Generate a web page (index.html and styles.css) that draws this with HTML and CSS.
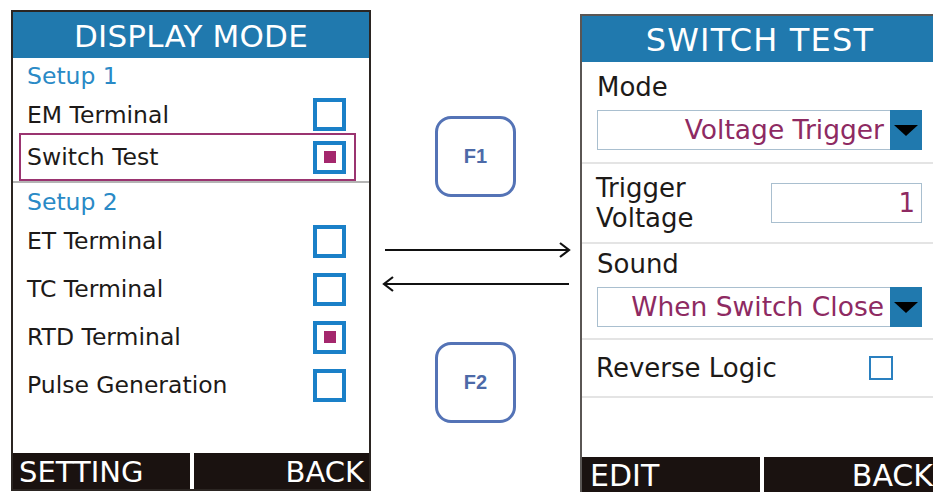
FILE: index.html
```html
<!DOCTYPE html>
<html>
<head>
<meta charset="utf-8">
<link rel="stylesheet" href="styles.css">
</head>
<body>
<div class="stage">
  <section class="panel panel-left">
    <div class="hdr">DISPLAY MODE</div>
    <div class="list">
      <div class="grp">Setup 1</div>
      <div class="item item-em"><span>EM Terminal</span><span class="cb"></span></div>
      <div class="item item-sel"><span>Switch Test</span><span class="cb"><i></i></span></div>
      <div class="sep"></div>
      <div class="grp grp2">Setup 2</div>
      <div class="item"><span>ET Terminal</span><span class="cb"></span></div>
      <div class="item"><span>TC Terminal</span><span class="cb"></span></div>
      <div class="item"><span>RTD Terminal</span><span class="cb"><i></i></span></div>
      <div class="item"><span>Pulse Generation</span><span class="cb"></span></div>
    </div>
    <div class="ftr">
      <div class="fbtn fl">SETTING</div>
      <div class="fdiv"></div>
      <div class="fbtn fr">BACK</div>
    </div>
  </section>

  <div class="middle">
    <div class="key">F1</div>
    <svg class="arrows" width="209" height="54" viewBox="0 0 209 54">
      <line x1="14" y1="10" x2="198" y2="10" stroke="#111" stroke-width="2"/>
      <polyline points="189,3 198,10 189,17" fill="none" stroke="#111" stroke-width="2.2"/>
      <line x1="14" y1="44" x2="198" y2="44" stroke="#111" stroke-width="2"/>
      <polyline points="22,37 13,44 22,51" fill="none" stroke="#111" stroke-width="2.2"/>
    </svg>
    <div class="key key2">F2</div>
  </div>

  <section class="panel panel-right">
    <div class="hdr hdr-r">SWITCH TEST</div>
    <div class="blk blk-mode">
      <div class="lbl lbl-mode">Mode</div>
      <div class="dd"><span class="ddtxt">Voltage Trigger</span><span class="ddbtn"><b></b></span></div>
    </div>
    <div class="rsep"></div>
    <div class="blk blk-trig">
      <div class="lbl lbl2">Trigger<br>Voltage</div>
      <div class="inp">1</div>
    </div>
    <div class="rsep"></div>
    <div class="blk blk-sound">
      <div class="lbl lbl-sound">Sound</div>
      <div class="dd"><span class="ddtxt">When Switch Close</span><span class="ddbtn"><b></b></span></div>
    </div>
    <div class="rsep"></div>
    <div class="blk blk-rev">
      <div class="lbl">Reverse Logic</div>
      <span class="cb2"></span>
    </div>
    <div class="rsep"></div>
    <div class="fill"></div>
    <div class="ftr ftr-r">
      <div class="fbtn fl2">EDIT</div>
      <div class="fdiv"></div>
      <div class="fbtn fr2">BACK</div>
    </div>
  </section>
</div>
</body>
</html>
```

FILE: styles.css
```css
html, body {
  margin: 0;
  padding: 0;
  background: #fff;
}
body {
  width: 933px;
  height: 492px;
  overflow: hidden;
  font-family: "DejaVu Sans", Verdana, sans-serif;
  color: #1d1a18;
}
.stage {
  display: flex;
  align-items: flex-start;
  width: 933px;
  height: 492px;
}
.panel {
  box-sizing: border-box;
  width: 360px;
  flex: none;
  display: flex;
  flex-direction: column;
  background: #fff;
}
.panel-left {
  margin: 10px 0 0 11px;
  height: 481px;
  border: 2px solid #2b2522;
}
.panel-right {
  margin-top: 14px;
  height: 481px;
  border: 2px solid #5a5654;
}
.hdr {
  height: 46px;
  flex: none;
  background: #2079ae;
  color: #fff;
  font-size: 31px;
  line-height: 48px;
  text-align: center;
  letter-spacing: 0.2px;
  white-space: nowrap;
}
.hdr-r {
  font-size: 32px;
  letter-spacing: 1.2px;
}
.list {
  flex: 1;
  display: flex;
  flex-direction: column;
}
.grp {
  height: 36px;
  line-height: 36px;
  padding-left: 14px;
  font-size: 23.5px;
  color: #2a8ac6;
}
.grp2 {
  height: 34px;
  line-height: 38px;
}
.item {
  box-sizing: border-box;
  margin: 0 13px 0 6px;
  padding: 0 8px 0 6px;
  border: 2px solid transparent;
  display: flex;
  align-items: center;
  justify-content: space-between;
  height: 48px;
  font-size: 23.5px;
}
.item-em {
  height: 39px;
  border-bottom: 0;
}
.item-sel {
  border-color: #9a3470;
}
.sep {
  height: 2px;
  background: #b4b4b4;
}
.cb {
  box-sizing: border-box;
  width: 33px;
  height: 33px;
  border: 4px solid #1a80c8;
  display: flex;
  align-items: center;
  justify-content: center;
}
.cb i {
  display: block;
  width: 12px;
  height: 12px;
  background: #a4276d;
}
.ftr {
  flex: none;
  height: 36px;
  background: #1a1210;
  display: flex;
  align-items: stretch;
  color: #fff;
  font-size: 29px;
}
.fbtn {
  flex: 1;
  line-height: 38px;
  white-space: nowrap;
}
.fl { padding-left: 6px; }
.fr { text-align: right; padding-right: 5px; }
.fdiv {
  width: 4px;
  background: #fff;
  margin-top: -3px;
}
.middle {
  width: 209px;
  flex: none;
  display: flex;
  flex-direction: column;
  align-items: center;
  padding-top: 116px;
}
.key {
  box-sizing: border-box;
  width: 81px;
  height: 81px;
  border: 3px solid #5473b6;
  border-radius: 16px;
  display: flex;
  align-items: center;
  justify-content: center;
  font-family: "Liberation Sans", Arial, sans-serif;
  font-weight: bold;
  font-size: 20px;
  color: #4d6aa8;
}
.arrows {
  display: block;
  margin-top: 43px;
}
.key2 {
  margin-top: 48px;
}
.blk {
  flex: none;
  display: flex;
}
.blk-mode, .blk-sound {
  flex-direction: column;
  padding: 0 16px 0 15px;
}
.blk-mode { height: 100px; }
.blk-sound { height: 94px; }
.lbl {
  font-size: 26px;
  white-space: nowrap;
}
.lbl-mode {
  height: 48px;
  line-height: 50px;
}
.lbl-sound {
  height: 43px;
  line-height: 40px;
}
.dd {
  box-sizing: border-box;
  height: 40px;
  border: 1px solid #a9bfcf;
  display: flex;
  align-items: stretch;
}
.ddtxt {
  flex: 1;
  text-align: right;
  padding-right: 6px;
  font-size: 26.5px;
  line-height: 38px;
  color: #8e2a62;
  white-space: nowrap;
}
.ddbtn {
  width: 32px;
  flex: none;
  background: #2079ae;
  display: flex;
  align-items: center;
  justify-content: center;
  margin: -1px -1px -1px 0;
}
.ddbtn b {
  display: block;
  width: 0;
  height: 0;
  border-left: 12px solid transparent;
  border-right: 12px solid transparent;
  border-top: 11px solid #000;
}
.rsep {
  flex: none;
  height: 2px;
  background: #e4e4e4;
}
.blk-trig {
  height: 78px;
  align-items: center;
  justify-content: space-between;
  padding: 0 16px 0 14px;
}
.lbl2 {
  line-height: 30px;
}
.inp {
  box-sizing: border-box;
  width: 151px;
  height: 40px;
  border: 1px solid #a9bfcf;
  text-align: right;
  padding-right: 6px;
  font-size: 26px;
  line-height: 38px;
  color: #8e2a62;
}
.blk-rev {
  height: 56px;
  align-items: center;
  padding: 0 45px 0 14px;
  justify-content: space-between;
}
.cb2 {
  box-sizing: border-box;
  width: 24px;
  height: 24px;
  border: 2px solid #2a80c0;
}
.fill { flex: 1; }
.fl2 { padding-left: 8px; font-size: 30px; }
.fr2 { text-align: right; padding-right: 5px; font-size: 30px; }
```
